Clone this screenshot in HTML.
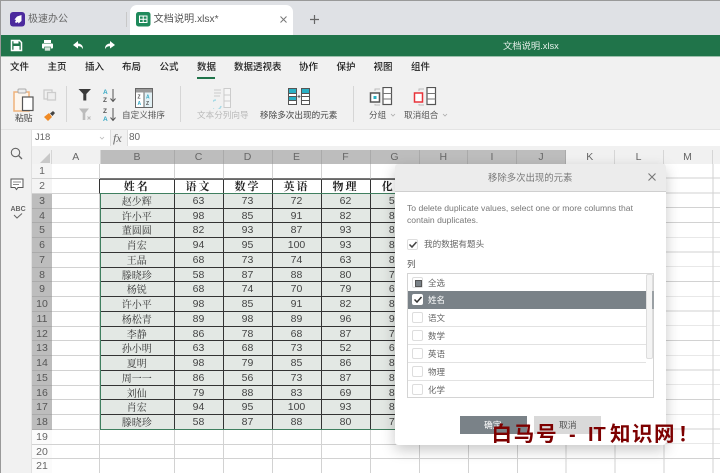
<!DOCTYPE html>
<html lang="zh"><head><meta charset="utf-8"><title>文档说明.xlsx</title>
<style>
html,body{margin:0;padding:0;background:#fff}
#p{position:relative;width:720px;height:473px;overflow:hidden;font-family:"Liberation Sans","Noto Sans CJK SC",sans-serif;background:#f1f1f1;filter:blur(.35px)}
#p div,#p svg{position:absolute}
.t{position:absolute;white-space:nowrap;line-height:14px}
.m{font-size:9.5px;color:#222;font-weight:500;top:61px}
.rb{font-size:8.6px;color:#555;top:108px}
.rows{left:32px;top:164.3px;width:388px}
#p .rows div{position:static;display:grid;grid-template-columns:20px 48px 74.5px 49px 49px 49px 49px 49.5px;height:14.75px}
.rows span{display:block;box-sizing:border-box;height:14.75px;border-right:1px solid #d2d2d2;border-bottom:1px solid #d2d2d2;text-align:center;font-size:10.5px;line-height:15.5px;color:#444;background:#fff;overflow:hidden}
.rows span:first-child{background:#f4f4f4;color:#666;border-right:0}
.rows .s span:first-child{background:#bdbdbd;color:#555;border-bottom:1px solid #aaa}
.rows .s span:nth-child(n+3){background:#e3e8e4;border-right:1px solid #333;border-bottom:1px solid #333}
.rows .s span:nth-child(3){font-family:"Noto Serif CJK SC",serif;color:#333;font-size:10px;line-height:14px}
.rows .w span:first-child{background:#fbfbfb}
.rows .e span:nth-child(2){border-right:1px solid #333}
.rows .e span:nth-child(n+3){border-right:1px solid #333;border-bottom:1px solid #333;border-top:1px solid #666;font-family:"Noto Serif CJK SC",serif;font-weight:700;font-size:11px;color:#222;letter-spacing:2px;line-height:12.5px}
.rows .o span:nth-child(n+3){border-bottom:1px solid #777}
.ch{top:150px;height:14.5px;box-sizing:border-box;font-size:10.5px;line-height:14px;text-align:center;color:#666;border-right:1px solid #aaa;background:#bdbdbd}
.cn{background:#f1f1f1;border-right:1px solid #d6d6d6}
.cb{left:412px;width:11px;height:11px;box-sizing:border-box;border:1px solid #ddd;border-radius:2px;background:#fff}
.li{left:408px;width:238px;height:1px;background:#e2e2e2}
.lt{left:428px;font-size:8.5px;color:#666}
</style></head><body>
<div id="p">
<!-- tab bar -->
<div style="left:0;top:0;width:720px;height:35px;background:#dfe1e5"></div>
<div style="left:0;top:0;width:720px;height:1px;background:#999"></div>
<div style="left:126px;top:12px;width:1px;height:15px;background:#c8c8c8"></div>
<svg style="left:10px;top:12px" width="16" height="15" viewBox="0 0 16 15"><rect width="15" height="14.5" rx="3" fill="#4c2a9e"/><path d="M11.5 3 7 4.5 4.5 7.5 6 8 5 10l1 1 2-1 .5 1.5 3-2.500z" fill="#fff"/></svg>
<span class="t" style="left:28px;top:13px;font-size:10px;color:#666">极速办公</span>
<div style="left:130px;top:5px;width:163px;height:30px;background:#fff;border-radius:7px 7px 0 0"></div>
<svg style="left:136px;top:12px" width="15" height="15" viewBox="0 0 15 15"><rect width="14.500" height="14.500" rx="2.500" fill="#1f8a5b"/><path d="M3.500 4h7.500v6.500H3.500zM3.500 7.200h7.500M7.200 4v6.500" fill="none" stroke="#fff" stroke-width="1"/></svg>
<span class="t" style="left:153.500px;top:13px;font-size:10.200px;color:#555">文档说明.xlsx*</span>
<svg style="left:279px;top:15px" width="9" height="9" viewBox="0 0 9 9"><path d="M1.500 1.500l6 6m0-6l-6 6" stroke="#777" stroke-width="1"/></svg>
<svg style="left:309px;top:14px" width="11" height="11" viewBox="0 0 11 11"><path d="M5.500 1v9M1 5.500h9" stroke="#666" stroke-width="1.200"/></svg>
<!-- green bar -->
<div style="left:0;top:35px;width:720px;height:21px;background:#20744a"></div>
<div style="left:0;top:56px;width:720px;height:1px;background:#9cc0ac"></div>
<svg style="left:10px;top:39px" width="13" height="13" viewBox="0 0 13 13"><path d="M1.500 1.500h8l2 2v8h-10z" fill="none" stroke="#fff" stroke-width="1.500"/><rect x="3.500" y="2" width="5" height="2.500" fill="#fff"/><rect x="3.500" y="7" width="6" height="4" fill="#fff"/></svg>
<svg style="left:41px;top:39px" width="13" height="13" viewBox="0 0 13 13"><rect x="3" y="1" width="7" height="3" fill="#fff"/><rect x="1" y="4.500" width="11" height="5" rx="1" fill="#fff"/><rect x="3.500" y="8" width="6" height="4" fill="#d6e6dd" stroke="#20744a" stroke-width=".6"/></svg>
<svg style="left:72px;top:40px" width="13" height="11" viewBox="0 0 13 11"><path d="M6 1 1 5l5 3.500V6.200c2.500 0 4 .8 5 3 .2-3.500-1.800-5.500-5-5.700z" fill="#fff"/></svg>
<svg style="left:103px;top:40px" width="13" height="11" viewBox="0 0 13 11"><path d="M7 1l5 4-5 3.500V6.200c-2.500 0-4 .8-5 3-.2-3.500 1.800-5.500 5-5.700z" fill="#fff"/></svg>
<span class="t" style="left:503px;top:38.500px;font-size:9.300px;color:#e6f0ea">文档说明.xlsx</span>
<!-- menu -->
<span class="t m" style="left:10px">文件</span><span class="t m" style="left:47.500px">主页</span><span class="t m" style="left:85px">插入</span><span class="t m" style="left:122px">布局</span><span class="t m" style="left:159.500px">公式</span><span class="t m" style="left:197px">数据</span><span class="t m" style="left:234px">数据透视表</span><span class="t m" style="left:299px">协作</span><span class="t m" style="left:336.500px">保护</span><span class="t m" style="left:373.500px">视图</span><span class="t m" style="left:411px">组件</span>
<div style="left:197px;top:77px;width:18px;height:1.500px;background:#20744a"></div>
<!-- ribbon -->
<svg style="left:12px;top:87px" width="23" height="25" viewBox="0 0 23 25"><path d="M2 5h15v19H2z" fill="#fdf6ee" stroke="#f0b27a" stroke-width="1.500"/><rect x="6" y="2" width="8" height="4" rx="1" fill="#eee" stroke="#aaa"/><rect x="10.500" y="10" width="10.500" height="13.500" fill="#fff" stroke="#555" stroke-width="1.200"/></svg>
<svg style="left:43px;top:89px" width="14" height="12" viewBox="0 0 14 12"><rect x="1" y="1" width="8" height="9" fill="none" stroke="#ccc" stroke-width="1.300"/><rect x="4.500" y="3.500" width="8" height="7.500" fill="#eee" stroke="#ccc" stroke-width="1.300"/></svg>
<svg style="left:43px;top:110px" width="13" height="12" viewBox="0 0 13 12"><path d="M1 7l5-4 3 4-4 4z" fill="#f08a24"/><path d="M7 3.500l3-2.500 2 2-2.500 3z" fill="#444"/></svg>
<span class="t" style="left:15px;top:111px;font-size:8.800px;color:#444">粘贴</span>
<div style="left:66px;top:86px;width:1px;height:36px;background:#d6d6d6"></div>
<svg style="left:78px;top:88px" width="14" height="13" viewBox="0 0 14 13"><path d="M.5 1h12.500l-4.700 5v6.500H5.300V6z" fill="#3a3a3a"/></svg>
<svg style="left:79px;top:108px" width="14" height="13" viewBox="0 0 14 13"><path d="M0 .5h10L6.300 5v7H3.700V5z" fill="#bcbcbc"/><path d="M8.500 8.500l3 3m0-3l-3 3" stroke="#bbb"/></svg>
<svg style="left:103px;top:88px" width="14" height="16" viewBox="0 0 14 16"><text x="0" y="6" font-size="6.500" font-weight="700" fill="#35a8c4" font-family="Liberation Sans">A</text><text x="0" y="14" font-size="6.500" font-weight="700" fill="#555" font-family="Liberation Sans">Z</text><path d="M10 1v12M7.500 10.500 10 13.500l2.500-3" fill="none" stroke="#555"/></svg>
<svg style="left:103px;top:107px" width="14" height="16" viewBox="0 0 14 16"><text x="0" y="6" font-size="6.500" font-weight="700" fill="#555" font-family="Liberation Sans">Z</text><text x="0" y="14" font-size="6.500" font-weight="700" fill="#35a8c4" font-family="Liberation Sans">A</text><path d="M10 1v12M7.500 10.500 10 13.500l2.500-3" fill="none" stroke="#555"/></svg>
<svg style="left:135px;top:88px" width="18" height="20" viewBox="0 0 18 20"><rect x=".5" y=".5" width="17" height="19" fill="#fff" stroke="#666"/><rect x="1" y="1" width="16" height="3.500" fill="#999"/><path d="M9 4.500v15" stroke="#666"/><rect x="9.500" y="4.500" width="7.500" height="14.500" fill="#e3f1f5"/><text x="2.500" y="10.500" font-size="5" font-weight="700" fill="#555" font-family="Liberation Sans">Z</text><text x="2.500" y="17" font-size="5" font-weight="700" fill="#35a8c4" font-family="Liberation Sans">A</text><text x="11" y="10.500" font-size="5" font-weight="700" fill="#35a8c4" font-family="Liberation Sans">A</text><text x="11" y="17" font-size="5" font-weight="700" fill="#555" font-family="Liberation Sans">Z</text></svg>
<span class="t rb" style="left:122px">自定义排序</span>
<div style="left:180px;top:86px;width:1px;height:36px;background:#d6d6d6"></div>
<svg style="left:213px;top:88px" width="19" height="21" viewBox="0 0 19 21"><path d="M1 2h7M1 5h7M1 8h6" stroke="#ccc"/><rect x="11" y=".5" width="6.500" height="19" fill="#f6f6f6" stroke="#ccc"/><path d="M11 7h6.500M11 13h6.500" stroke="#ccc"/><path d="M3 12a5 5 0 1 0 5 6" fill="none" stroke="#a9dbe6" stroke-width="1.500"/></svg>
<span class="t rb" style="left:197px;color:#b9b9b9">文本分列向导</span>
<svg style="left:288px;top:88px" width="22" height="17" viewBox="0 0 22 17"><rect x=".5" y=".5" width="8" height="16" fill="#fff" stroke="#555"/><rect x="1" y="1" width="7" height="4" fill="#2ab0c4"/><rect x="1" y="9" width="7" height="3" fill="#2ab0c4"/><path d="M1 5.500h7M1 8.500h7M1 12.500h7" stroke="#555"/><rect x="13.500" y=".5" width="8" height="16" fill="#fff" stroke="#555"/><rect x="14" y="1" width="7" height="4" fill="#2ab0c4"/><path d="M14 5.500h7M14 8.500h7M14 12.500h7" stroke="#555"/><path d="M9.500 8.500h3M11 7v3" stroke="#666"/></svg>
<span class="t rb" style="left:260px;color:#444">移除多次出现的元素</span>
<div style="left:353px;top:86px;width:1px;height:36px;background:#d6d6d6"></div>
<svg style="left:369px;top:87px" width="24" height="19" viewBox="0 0 24 19"><rect x="1.500" y="6" width="9" height="9" fill="#fff" stroke="#555" stroke-width="1.500"/><rect x="4.500" y="9" width="3" height="3" fill="#2ab0c4"/><path d="M6 4V2h5M6 17v1h5" fill="none" stroke="#bbb"/><rect x="14" y=".5" width="8.500" height="17" fill="#fff" stroke="#555" stroke-width="1.200"/><path d="M14 6.500h8.500M14 12h8.500" stroke="#777"/></svg>
<span class="t rb" style="left:369px">分组</span>
<svg style="left:389.500px;top:113px" width="6" height="5" viewBox="0 0 6 5"><path d="M1 1l2 2 2-2" fill="none" stroke="#aaa" stroke-width=".8"/></svg>
<svg style="left:413px;top:87px" width="24" height="19" viewBox="0 0 24 19"><rect x="1.500" y="6" width="8" height="9" fill="#fff" stroke="#e8333a" stroke-width="1.500"/><path d="M6 4V2h5M6 17v1h5" fill="none" stroke="#bbb"/><rect x="14" y=".5" width="8.500" height="17" fill="#fff" stroke="#555" stroke-width="1.200"/><path d="M14 6.500h8.500M14 12h8.500" stroke="#777"/></svg>
<span class="t rb" style="left:404px">取消组合</span>
<svg style="left:441.500px;top:113px" width="6" height="5" viewBox="0 0 6 5"><path d="M1 1l2 2 2-2" fill="none" stroke="#aaa" stroke-width=".8"/></svg>
<div style="left:0;top:129px;width:720px;height:1px;background:#e4e4e4"></div>
<!-- sidebar -->
<div style="left:0;top:0;width:1px;height:473px;background:#999"></div>
<div style="left:31px;top:130px;width:1px;height:343px;background:#e0e0e0"></div>
<svg style="left:10px;top:147px" width="13" height="13" viewBox="0 0 13 13"><circle cx="5.500" cy="5.500" r="4.200" fill="none" stroke="#666" stroke-width="1.100"/><path d="M8.500 8.500l3.500 3.500" stroke="#666" stroke-width="1.300"/></svg>
<svg style="left:10px;top:178px" width="14" height="13" viewBox="0 0 14 13"><path d="M1 1h12v8.500H8L6.500 11.500 5 9.500H1z" fill="#fff" stroke="#555"/><path d="M3 4h8M3 6.500h6" stroke="#666" stroke-width=".8"/></svg>
<span class="t" style="left:10.500px;top:205.500px;font-size:7px;font-weight:700;color:#666;line-height:8px">ABC</span>
<svg style="left:13px;top:213px" width="10" height="7" viewBox="0 0 10 7"><path d="M1 2l3 3 5-4.500" fill="none" stroke="#666"/></svg>
<!-- formula bar -->
<div style="left:32px;top:130px;width:688px;height:15.500px;background:#fff"></div>
<span class="t" style="left:35px;top:131px;font-size:9.500px;color:#666">J18</span>
<svg style="left:99px;top:136px" width="6" height="5" viewBox="0 0 6 5"><path d="M1 1l2 2 2-2" fill="none" stroke="#bbb" stroke-width=".8"/></svg>
<div style="left:110px;top:130px;width:16px;height:15.500px;background:#f1f1f1;border-right:1px solid #ddd;border-left:1px solid #ddd"></div>
<span class="t" style="left:113px;top:131px;font-size:12px;font-style:italic;color:#666;font-family:'Liberation Serif',serif">fx</span>
<span class="t" style="left:129px;top:131px;font-size:10px;color:#666">80</span>
<div style="left:32px;top:145.500px;width:688px;height:4.500px;background:#f1f1f1"></div>
<!-- column headers -->
<div class="ch cn" style="left:32px;width:20px;background:#f1f1f1"></div>
<svg style="left:40px;top:153px" width="10" height="10" viewBox="0 0 10 10"><path d="M10 0v10H0z" fill="#c8c8c8"/></svg>
<div class="ch cn" style="left:52px;width:48.500px">A</div>
<div class="ch" style="left:100.500px;width:74px">B</div><div class="ch" style="left:174.500px;width:49px">C</div><div class="ch" style="left:223.500px;width:49px">D</div><div class="ch" style="left:272.500px;width:49px">E</div><div class="ch" style="left:321.500px;width:49px">F</div><div class="ch" style="left:370.500px;width:49px">G</div><div class="ch" style="left:419.500px;width:48.500px">H</div><div class="ch" style="left:468px;width:49px">I</div><div class="ch" style="left:517px;width:49px">J</div>
<div class="ch cn" style="left:566px;width:48.500px">K</div><div class="ch cn" style="left:614.500px;width:49px">L</div><div class="ch cn" style="left:663.500px;width:49px">M</div><div class="ch cn" style="left:712.500px;width:8px"></div>
<!-- right grid -->
<div style="left:419.500px;top:164.300px;width:301px;height:309px;background:repeating-linear-gradient(to right,transparent 0,transparent 47.900px,#d2d2d2 47.900px,#d2d2d2 48.900px),repeating-linear-gradient(to bottom,#fff 0,#fff 13.750px,#d2d2d2 13.750px,#d2d2d2 14.750px)"></div>
<!-- cells -->
<div class="rows">
<div class="o"><span>1</span><span></span><span></span><span></span><span></span><span></span><span></span><span></span></div>
<div class="e"><span>2</span><span></span><span>姓名</span><span>语文</span><span>数学</span><span>英语</span><span>物理</span><span>化学</span></div>
<div class="s"><span>3</span><span></span><span>赵少辉</span><span>63</span><span>73</span><span>72</span><span>62</span><span>58</span></div>
<div class="s"><span>4</span><span></span><span>许小平</span><span>98</span><span>85</span><span>91</span><span>82</span><span>86</span></div>
<div class="s"><span>5</span><span></span><span>董圆圆</span><span>82</span><span>93</span><span>87</span><span>93</span><span>86</span></div>
<div class="s"><span>6</span><span></span><span>肖宏</span><span>94</span><span>95</span><span>100</span><span>93</span><span>88</span></div>
<div class="s"><span>7</span><span></span><span>王晶</span><span>68</span><span>73</span><span>74</span><span>63</span><span>84</span></div>
<div class="s"><span>8</span><span></span><span>滕晓珍</span><span>58</span><span>87</span><span>88</span><span>80</span><span>76</span></div>
<div class="s"><span>9</span><span></span><span>杨锐</span><span>68</span><span>74</span><span>70</span><span>79</span><span>66</span></div>
<div class="s"><span>10</span><span></span><span>许小平</span><span>98</span><span>85</span><span>91</span><span>82</span><span>86</span></div>
<div class="s"><span>11</span><span></span><span>杨松青</span><span>89</span><span>98</span><span>89</span><span>96</span><span>90</span></div>
<div class="s"><span>12</span><span></span><span>李静</span><span>86</span><span>78</span><span>68</span><span>87</span><span>76</span></div>
<div class="s"><span>13</span><span></span><span>孙小明</span><span>63</span><span>68</span><span>73</span><span>52</span><span>66</span></div>
<div class="s"><span>14</span><span></span><span>夏明</span><span>98</span><span>79</span><span>85</span><span>86</span><span>86</span></div>
<div class="s"><span>15</span><span></span><span>周一一</span><span>86</span><span>56</span><span>73</span><span>87</span><span>88</span></div>
<div class="s"><span>16</span><span></span><span>刘仙</span><span>79</span><span>88</span><span>83</span><span>69</span><span>80</span></div>
<div class="s"><span>17</span><span></span><span>肖宏</span><span>94</span><span>95</span><span>100</span><span>93</span><span>88</span></div>
<div class="s"><span>18</span><span></span><span>滕晓珍</span><span>58</span><span>87</span><span>88</span><span>80</span><span>76</span></div>
<div class="w"><span>19</span><span></span><span></span><span></span><span></span><span></span><span></span><span></span></div>
<div class="w"><span>20</span><span></span><span></span><span></span><span></span><span></span><span></span><span></span></div>
<div class="w"><span>21</span><span></span><span></span><span></span><span></span><span></span><span></span><span></span></div>
</div>
<!-- selection border -->
<div style="left:100px;top:193.200px;width:330px;height:237.300px;box-sizing:border-box;border:1.200px solid #3f7f5f;border-right:0"></div>
<!-- dialog -->
<div style="left:395px;top:164px;width:271px;height:281px;background:#fff;border-radius:3px;box-shadow:0 5px 14px rgba(0,0,0,.22)"></div>
<div style="left:395px;top:164px;width:271px;height:26.500px;background:#ececec;border-bottom:1px solid #cfcfcf;border-radius:3px 3px 0 0"></div>
<span class="t" style="left:488px;top:171px;font-size:9.400px;color:#777">移除多次出现的元素</span>
<svg style="left:647px;top:172px" width="10" height="10" viewBox="0 0 10 10"><path d="M1.500 1.500l7 7m0-7l-7 7" stroke="#777" stroke-width="1.100"/></svg>
<span class="t" style="left:407px;top:201px;font-size:8.600px;color:#777">To delete duplicate values, select one or more columns that</span>
<span class="t" style="left:407px;top:213px;font-size:8.600px;color:#777">contain duplicates.</span>
<div class="cb" style="left:407px;top:239px"></div>
<svg style="left:408px;top:240px" width="10" height="9" viewBox="0 0 10 9"><path d="M1.500 4.500l2.500 2.500 4.500-5" fill="none" stroke="#444" stroke-width="1.500"/></svg>
<span class="t" style="left:424px;top:237px;font-size:8.600px;color:#666">我的数据有题头</span>
<span class="t" style="left:407px;top:257px;font-size:8.600px;color:#555">列</span>
<div style="left:407px;top:273px;width:247px;height:125px;box-sizing:border-box;border:1px solid #d4d4d4;background:#fff"></div>
<div style="left:408px;top:291px;width:238px;height:18px;background:#7a8288"></div>
<div class="li" style="top:326px"></div><div class="li" style="top:344px"></div><div class="li" style="top:362px"></div><div class="li" style="top:380px;width:245px"></div>
<div style="left:646px;top:274px;width:7px;height:85px;box-sizing:border-box;background:#f4f4f4;border:1px solid #ddd;border-radius:2px"></div>
<div style="left:652px;top:291px;width:1.500px;height:18px;background:#9aa0a4"></div>
<div class="cb" style="top:277px"></div><div style="left:415px;top:280px;width:5px;height:5px;background:#7a8288;border:.5px solid #555"></div>
<div class="cb" style="top:294px;border-color:#fff"></div>
<svg style="left:413px;top:295px" width="10" height="9" viewBox="0 0 10 9"><path d="M1.500 4.500l2.500 2.500 4.500-5" fill="none" stroke="#333" stroke-width="1.500"/></svg>
<div class="cb" style="top:312px"></div><div class="cb" style="top:330px"></div><div class="cb" style="top:348px"></div><div class="cb" style="top:366px"></div><div class="cb" style="top:384px"></div>
<span class="t lt" style="top:276px">全选</span><span class="t lt" style="top:293px;color:#fff">姓名</span><span class="t lt" style="top:311px">语文</span><span class="t lt" style="top:329px">数学</span><span class="t lt" style="top:347px">英语</span><span class="t lt" style="top:365px">物理</span><span class="t lt" style="top:383px">化学</span>
<div style="left:460px;top:416px;width:66.500px;height:17.500px;background:#7a8288"></div>
<span class="t" style="left:484px;top:418px;font-size:8.800px;color:#fff">确定</span>
<div style="left:534px;top:416px;width:67px;height:17.500px;background:#d9d9d9"></div>
<span class="t" style="left:559px;top:418px;font-size:8.800px;color:#555">取消</span>
<!-- watermark -->
<span class="t" style="left:491.500px;top:424.500px;font-size:20.500px;line-height:20px;font-weight:700;color:#7d0000;letter-spacing:1.800px">白马号</span>
<span class="t" style="left:569px;top:424.500px;font-size:20px;line-height:20px;font-weight:700;color:#7d0000">-</span>
<span class="t" style="left:588px;top:424.500px;font-size:20px;line-height:20px;font-weight:700;color:#7d0000">IT</span>
<span class="t" style="left:610px;top:424.500px;font-size:20.500px;line-height:20px;font-weight:700;color:#7d0000;letter-spacing:1.500px">知识网</span>
<span class="t" style="left:678px;top:424.500px;font-size:20px;line-height:20px;font-weight:700;color:#7d0000">！</span>
</div>
</body></html>
